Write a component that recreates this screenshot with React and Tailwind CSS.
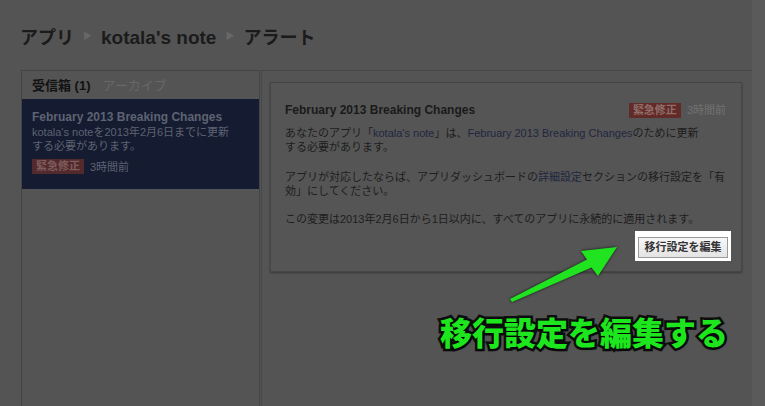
import React from 'react';

const sans = "font-['Liberation_Sans','Noto_Sans_CJK_JP',sans-serif]";

function Badge({ className = '' }) {
    return (
        <span className={`inline-flex items-center h-[15px] px-1 text-[11px] font-bold leading-none ${className}`}>
            緊急修正
        </span>
    );
}

function Sep() {
    return <span className="mx-[9px] text-[9px] text-[#676767] relative top-[-2px]">▶</span>;
}

export default function App() {
    return (
        <div className={`relative w-[765px] h-[406px] overflow-hidden bg-[#545454] flex ${sans}`}>
            <div className="w-[752px] flex flex-col">
                {/* fil d'ariane */}
                <h1 className="h-[70px] pl-5 pt-[27px] text-[18px] font-bold leading-[22px] text-[#1b1b1b] flex items-start">
                    <span>アプリ</span>
                    <Sep />
                    <span className="text-[19px]">kotala's note</span>
                    <Sep />
                    <span>アラート</span>
                </h1>

                <div className="flex flex-1 ml-[21px]">
                    {/* colonne gauche */}
                    <div className="w-[239px] border border-b-0 border-[#444] flex flex-col">
                        <div className="h-[28px] flex items-center px-[10px] text-[13px] leading-none">
                            <span className="font-bold text-[#121212]">受信箱 (1)</span>
                            <span className="ml-[12px] text-[#686868]">アーカイブ</span>
                        </div>
                        <div className="h-[90px] bg-[#151b30] px-[10px] pt-[11px] text-[11px] leading-[14px] text-[#5e6373]">
                            <div className="text-[12px] font-bold">February 2013 Breaking Changes</div>
                            <div className="mt-px">
                                kotala's noteを2013年2月6日までに更新<br />する必要があります。
                            </div>
                            <div className="mt-[6px] flex items-center">
                                <Badge className="bg-[#532a2c] text-[#7e5b5c]" />
                                <span className="ml-[6px] text-[#5e6374]">3時間前</span>
                            </div>
                        </div>
                    </div>

                    {/* contenu */}
                    <div className="flex-1 ml-px border-l border-t border-[#474747] pl-[8px] pt-[11px]">
                        <div className="w-[472px] border border-[#454545] bg-[#555555] shadow-[0_1px_2px_rgba(0,0,0,0.35)] px-[14px] pt-[19px] pb-[10px]">
                            <div className="h-[16px] flex items-center justify-between">
                                <span className="text-[12px] font-bold text-[#1a1a1a]">February 2013 Breaking Changes</span>
                                <span className="flex items-center pr-px">
                                    <Badge className="bg-[#622b27] text-[#8f6d6a]" />
                                    <span className="ml-[6px] text-[11px] text-[#727272]">3時間前</span>
                                </span>
                            </div>
                            <p className="mt-[8px] text-[11px] leading-[14px] text-[#1d1d1d]">
                                あなたのアプリ「<span className="text-[#1f2740]">kotala's note</span>」は、<span className="text-[#1f2740]">February 2013 Breaking Changes</span>のために更新<br />する必要があります。
                            </p>
                            <p className="mt-4 text-[11px] leading-[14px] text-[#1d1d1d]">
                                アプリが対応したならば、アプリダッシュボードの<span className="text-[#1f2740]">詳細設定</span>セクションの移行設定を「有<br />効」にしてください。
                            </p>
                            <p className="mt-[14px] text-[11px] leading-[14px] text-[#1d1d1d]">
                                この変更は2013年2月6日から1日以内に、すべてのアプリに永続的に適用されます。
                            </p>
                            <div className="mt-[5px] flex justify-end -mr-[4px]">
                                <div className="bg-white p-[3px]">
                                    <button className="h-[21px] w-[90px] border border-[#9a9a9a] bg-gradient-to-b from-[#f7f7f7] to-[#e4e4e4] text-[11px] font-bold text-[#333] leading-none">
                                        移行設定を編集
                                    </button>
                                </div>
                            </div>
                        </div>
                    </div>
                </div>
            </div>
            <div className="flex-1 bg-[#5a5a5a]" />

            {/* annotation : flèche */}
            <svg className="absolute left-0 top-0 w-[765px] h-[406px] pointer-events-none drop-shadow-[0_0_1.5px_rgba(0,0,0,0.8)]" viewBox="0 0 765 406">
                <polygon points="510,299 587,259.5 581,251 617,247 598,276 591.5,267.5 512,302" fill="#1fe41f" />
            </svg>

            {/* annotation : texte */}
            <div className="absolute left-[440px] top-[315px] text-[32px] leading-none font-black text-[#1ee61e] font-['Noto_Sans_CJK_JP',sans-serif] [-webkit-text-stroke:5px_#0e0e0e] [paint-order:stroke_fill] [text-shadow:0_1px_3px_rgba(0,0,0,0.8)]">
                移行設定を編集する
            </div>
        </div>
    );
}
